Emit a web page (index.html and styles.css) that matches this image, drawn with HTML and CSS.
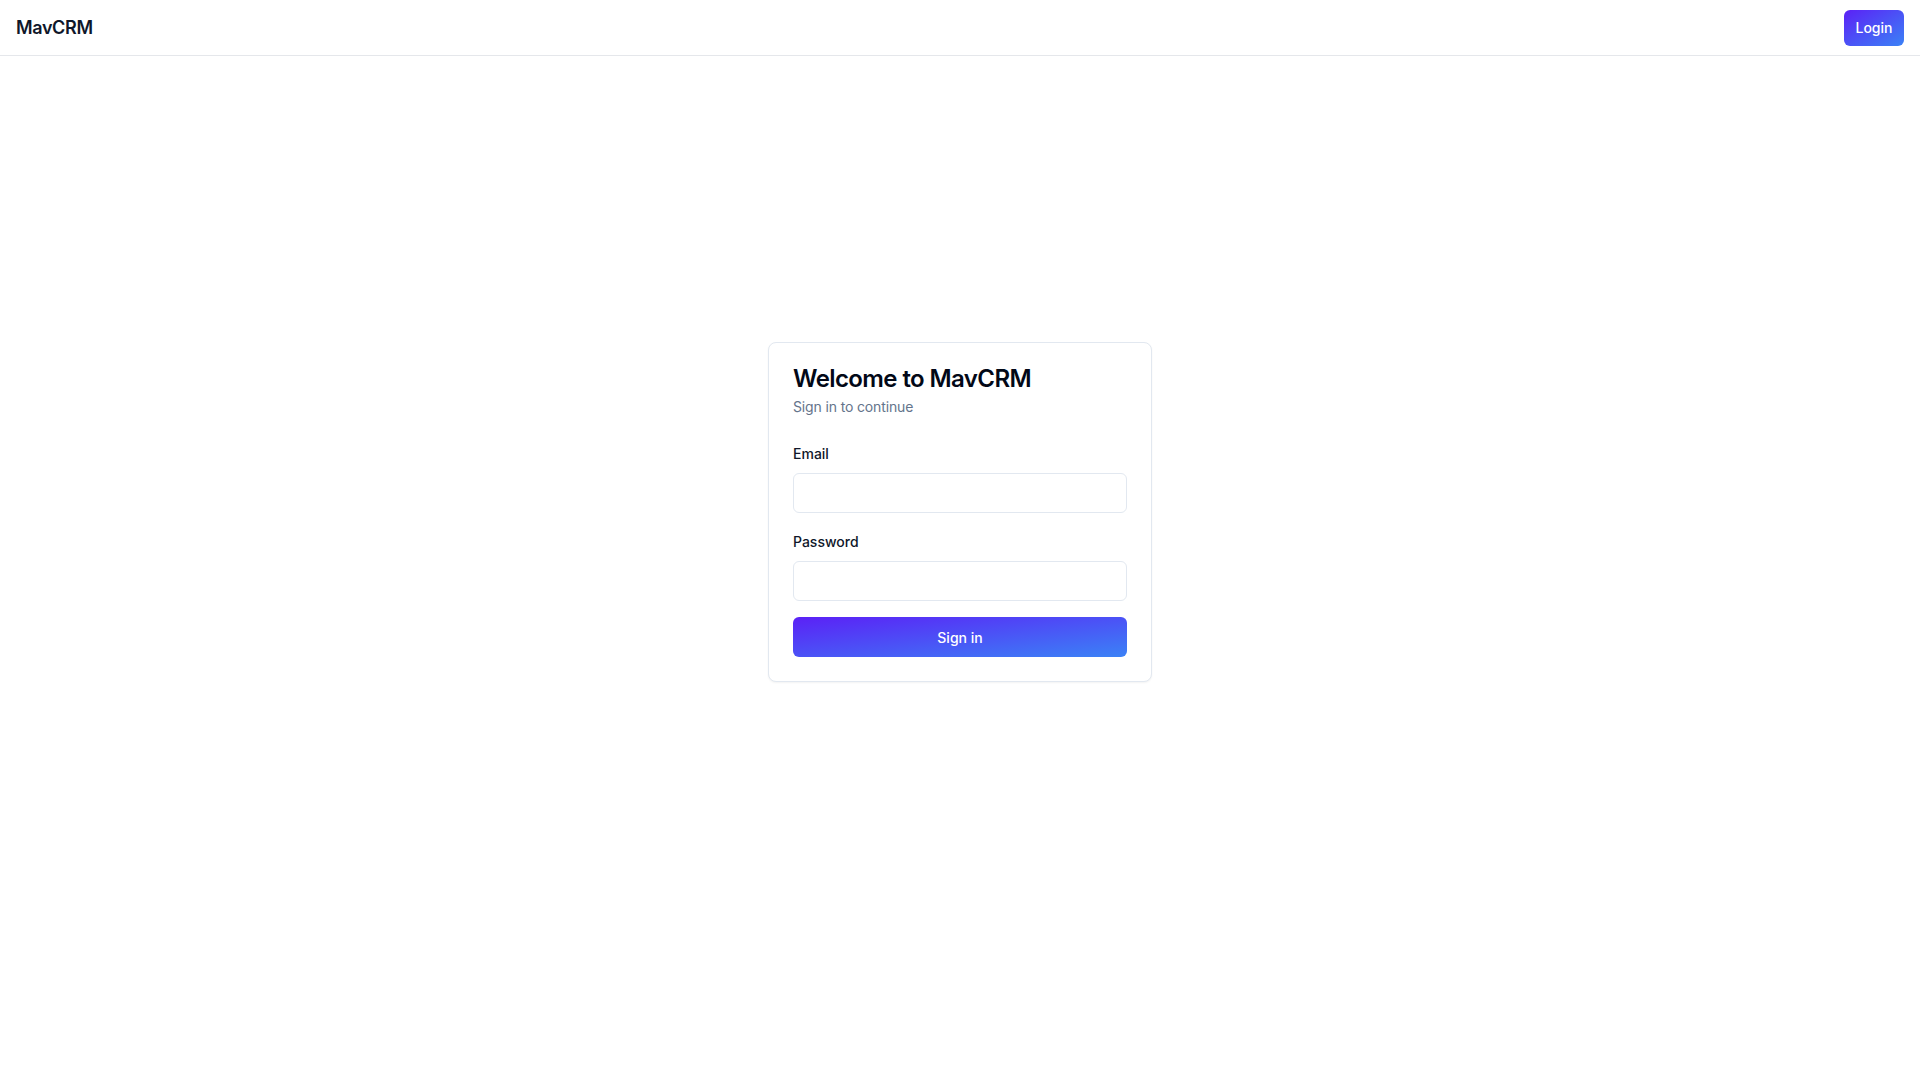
FILE: index.html
```html
<!DOCTYPE html>
<html lang="en">
<head>
<meta charset="utf-8">
<title>MavCRM</title>
<link rel="stylesheet" href="styles.css">
</head>
<body>
<header class="topbar">
  <div class="brand">MavCRM</div>
  <button class="btn-login" type="button">Login</button>
</header>
<main class="main">
  <section class="card">
    <h1 class="card-title">Welcome to MavCRM</h1>
    <p class="card-desc">Sign in to continue</p>
    <form class="form">
      <div class="field">
        <label class="label" for="email">Email</label>
        <input class="input" id="email" type="email">
      </div>
      <div class="field field-pw">
        <label class="label" for="password">Password</label>
        <input class="input" id="password" type="password">
      </div>
      <button class="btn-submit" type="button">Sign in</button>
    </form>
  </section>
</main>
</body>
</html>
```

FILE: styles.css
```css
* { box-sizing: border-box; }
html, body { margin: 0; padding: 0; }
body {
  font-family: Inter, "Noto Sans", "Liberation Sans", sans-serif;
  background: #ffffff;
  color: #0f172a;
  min-height: 1080px;
}
.topbar {
  height: 56px;
  border-bottom: 1px solid #e5e7eb;
  display: flex;
  align-items: center;
  justify-content: space-between;
  padding: 0 16px;
}
.brand {
  font-size: 18px;
  font-weight: 600;
  line-height: 28px;
  letter-spacing: -0.02em;
  color: #0f172a;
}
.btn-login {
  height: 36px;
  width: 60px;
  padding: 0;
  border: 0;
  border-radius: 6px;
  background: linear-gradient(to bottom right, #5b21f6, #3b82f6);
  color: #ffffff;
  font-family: inherit;
  font-size: 14px;
  font-weight: 500;
}
.main {
  display: flex;
  justify-content: center;
  padding-top: 286px;
}
.card {
  width: 384px;
  border: 1px solid #e2e8f0;
  border-radius: 8px;
  background: #ffffff;
  box-shadow: 0 1px 2px 0 rgba(0, 0, 0, 0.05);
  padding: 24px;
}
.card-title {
  margin: 0;
  font-size: 24px;
  line-height: 24px;
  font-weight: 600;
  letter-spacing: -0.025em;
  color: #020817;
}
.card-desc {
  margin: 6px 0 0;
  font-size: 14px;
  line-height: 20px;
  letter-spacing: -0.01em;
  color: #64748b;
}
.form {
  margin-top: 27px;
  display: flex;
  flex-direction: column;
}
.field {
  display: flex;
  flex-direction: column;
}
.field-pw { margin-top: 19px; }
.label {
  font-size: 14px;
  line-height: 20px;
  font-weight: 500;
  color: #0f172a;
}
.input {
  margin-top: 9px;
  height: 40px;
  width: 100%;
  border: 1px solid #e2e8f0;
  border-radius: 6px;
  background: #ffffff;
  padding: 8px 12px;
  font-family: inherit;
  font-size: 14px;
  outline: none;
}
.btn-submit {
  margin-top: 16px;
  height: 40px;
  width: 100%;
  border: 0;
  border-radius: 6px;
  background: linear-gradient(to bottom right, #5b21f6, #3b82f6);
  color: #ffffff;
  font-family: inherit;
  font-size: 14px;
  font-weight: 500;
}
```
